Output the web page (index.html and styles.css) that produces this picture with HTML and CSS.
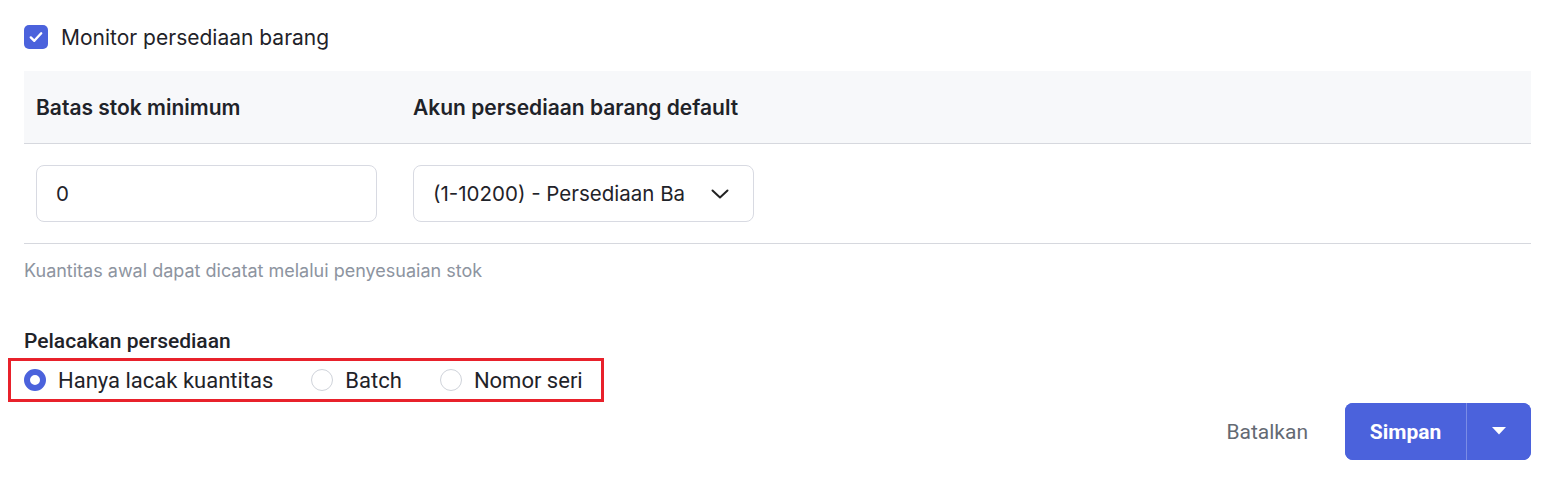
FILE: index.html
```html
<!DOCTYPE html>
<html lang="id">
<head>
<meta charset="utf-8">
<title>Persediaan</title>
<link rel="stylesheet" href="styles.css">
</head>
<body>
<div class="page">
  <label class="check-row">
    <span class="checkbox">
      <svg width="16" height="16" viewBox="0 0 16 16"><path d="M2.8 8.4 L6.3 11.8 L13.2 4.3" fill="none" stroke="#fff" stroke-width="2.4" stroke-linecap="round" stroke-linejoin="round"/></svg>
    </span>
    <span class="check-label">Monitor persediaan barang</span>
  </label>

  <div class="table">
    <div class="thead">
      <div class="th col1">Batas stok minimum</div>
      <div class="th col2">Akun persediaan barang default</div>
    </div>
    <div class="tbody">
      <div class="td col1"><div class="input">0</div></div>
      <div class="td col2">
        <div class="input select">
          <span class="select-text">(1-10200) - Persediaan Barang</span>
          <svg class="chev" width="18" height="10" viewBox="0 0 18 10"><path d="M1.5 1.5 L9 8.5 L16.5 1.5" fill="none" stroke="#222" stroke-width="2" stroke-linecap="round" stroke-linejoin="round"/></svg>
        </div>
      </div>
    </div>
  </div>

  <p class="hint">Kuantitas awal dapat dicatat melalui penyesuaian stok</p>

  <h3 class="section-title">Pelacakan persediaan</h3>
  <div class="radio-box">
    <label class="radio-item"><span class="radio checked"></span>Hanya lacak kuantitas</label>
    <label class="radio-item"><span class="radio"></span>Batch</label>
    <label class="radio-item"><span class="radio"></span>Nomor seri</label>
  </div>

  <div class="actions">
    <button class="btn-cancel">Batalkan</button>
    <div class="btn-split">
      <button class="btn-main">Simpan</button>
      <button class="btn-caret"><svg width="14" height="8" viewBox="0 0 14 8"><path d="M0 0 H14 L7 7.5 Z" fill="#fff"/></svg></button>
    </div>
  </div>
</div>
</body>
</html>
```

FILE: styles.css
```css
* { box-sizing: border-box; }
html, body { margin: 0; padding: 0; background: #fff; }
body { font-family: Inter, "Noto Sans", sans-serif; color: #1f2329; }

.page { padding: 25px 26px 0 24px; }

.check-row { display: flex; align-items: center; gap: 13px; height: 24px; }
.checkbox {
  width: 24px; height: 24px; border-radius: 5px; background: #4b62dc;
  display: flex; align-items: center; justify-content: center;
}
.check-label { font-size: 21px; color: #1f2329; }

.table { margin-top: 22px; }
.thead {
  display: flex; background: #f7f8fa; height: 73px; align-items: center;
  border-bottom: 1px solid #d6d8de;
}
.th { font-size: 21px; font-weight: 600; color: #1f2329; padding: 0 12px; }
.col1 { width: 377px; }
.col2 { width: 377px; }
.tbody { display: flex; align-items: center; height: 100px; border-bottom: 1px solid #d6d8de; }
.td { padding: 0 12px; }
.input {
  width: 341px; height: 57px; border: 1px solid #d8dae2; border-radius: 8px;
  display: flex; align-items: center; padding: 0 19px; font-size: 20.5px; color: #1f2329;
}
.select { padding-right: 24px; gap: 16px; }
.select-text { width: 253px; overflow: hidden; white-space: nowrap; }
.chev { flex: none; margin-left: auto; }

.hint { margin: 16px 0 0; font-size: 18px; color: #8d94a0; line-height: 22px; }

.section-title {
  margin: 47px 0 0; font-family: Roboto, sans-serif; font-weight: 500; font-size: 21px;
  color: #1f2329; line-height: 24px;
}
.radio-box {
  margin: 5px 0 0 -16px; width: 596px; height: 44px; border: 3px solid #e8212b;
  display: flex; align-items: center; padding-left: 13px; gap: 38px;
  font-family: Roboto, sans-serif; font-size: 22px; color: #1f2329;
}
.radio-item { display: flex; align-items: center; gap: 12px; }
.radio {
  width: 22px; height: 22px; border-radius: 50%; border: 1.5px solid #cfd3da; background: #fff;
}
.radio.checked { border: 6px solid #4b62dc; }

.actions { display: flex; justify-content: flex-end; align-items: center; margin-top: 1px; gap: 37px; }
.btn-cancel {
  background: none; border: 0; font-family: Roboto, sans-serif; font-size: 21px; color: #646a73; padding: 0;
}
.btn-split { display: flex; height: 57px; border-radius: 8px; overflow: hidden; background: #4b62dc; }
.btn-main {
  width: 122px; border: 0; background: #4b62dc; color: #fff;
  font-family: Roboto, sans-serif; font-weight: 700; font-size: 21px; border-right: 1px solid #7b8ce6;
}
.btn-caret { width: 64px; border: 0; background: #4b62dc; display: flex; align-items: center; justify-content: center; padding: 0 0 2px; }
```
